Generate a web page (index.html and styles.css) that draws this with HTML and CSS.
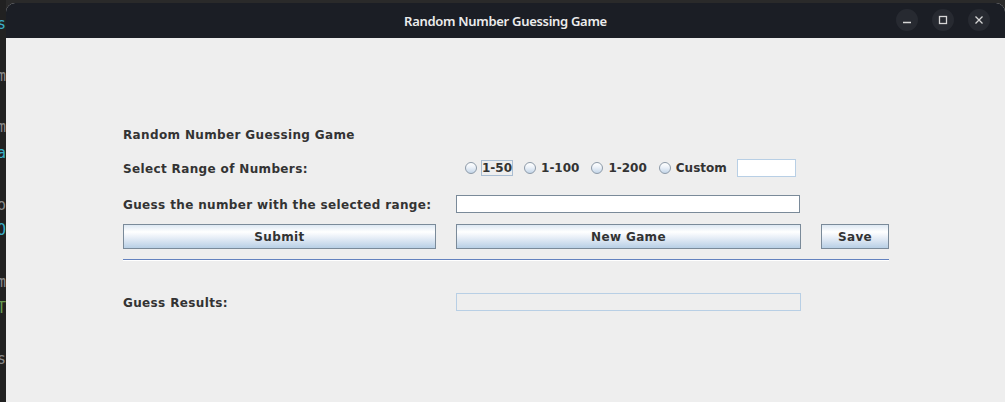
FILE: index.html
```html
<!DOCTYPE html>
<html>
<head>
<meta charset="utf-8">
<title>Random Number Guessing Game</title>
<link rel="stylesheet" href="styles.css">
</head>
<body>
<div class="desktop">
  <div class="side-strip">
    <div class="code cyan">class</div>
    <div class="code"></div>
    <div class="code gray">item</div>
    <div class="code"></div>
    <div class="code gray">enum</div>
    <div class="code cyan">a~</div>
    <div class="code"></div>
    <div class="code gray">do</div>
    <div class="code cyan">O</div>
    <div class="code"></div>
    <div class="code gray">sum</div>
    <div class="code green">INT</div>
    <div class="code"></div>
    <div class="code gray">ss</div>
  </div>
  <div class="window">
    <div class="titlebar">
      <div class="title">Random Number Guessing Game</div>
      <div class="controls">
        <div class="ctl">
          <svg width="10" height="10" viewBox="0 0 10 10"><path d="M1 7.5H9" stroke="#d6d6d6" stroke-width="1.3"/></svg>
        </div>
        <div class="ctl">
          <svg width="10" height="10" viewBox="0 0 10 10"><rect x="1.5" y="1.5" width="7" height="7" fill="none" stroke="#d6d6d6" stroke-width="1.3"/></svg>
        </div>
        <div class="ctl">
          <svg width="10" height="10" viewBox="0 0 10 10"><path d="M1.5 1.5L8.5 8.5M8.5 1.5L1.5 8.5" stroke="#d6d6d6" stroke-width="1.3"/></svg>
        </div>
      </div>
    </div>
    <div class="content">
      <div class="row row-title">
        <div class="label span-all">Random Number Guessing Game</div>
      </div>
      <div class="row row-range">
        <div class="label">Select Range of Numbers:</div>
        <div class="radios">
          <div class="radio"><span class="dot"></span><span class="rlabel focused">1-50</span></div>
          <div class="radio"><span class="dot"></span><span class="rlabel">1-100</span></div>
          <div class="radio"><span class="dot"></span><span class="rlabel">1-200</span></div>
          <div class="radio"><span class="dot"></span><span class="rlabel">Custom</span></div>
          <div class="field custom"></div>
        </div>
      </div>
      <div class="row row-guess">
        <div class="label">Guess the number with the selected range:</div>
        <div class="field guess"></div>
      </div>
      <div class="row row-buttons">
        <div class="btn">Submit</div>
        <div class="btn">New Game</div>
        <div class="btn">Save</div>
      </div>
      <div class="separator"></div>
      <div class="row row-results">
        <div class="label">Guess Results:</div>
        <div class="field results"></div>
      </div>
    </div>
  </div>
</div>
</body>
</html>
```

FILE: styles.css
```css
* { box-sizing: border-box; }
html, body { margin: 0; padding: 0; }
body { width: 1005px; height: 402px; overflow: hidden; background: #262626; }

.desktop {
  display: flex;
  height: 402px;
  padding-top: 3px;
  background: #2a2a2a;
}

.side-strip {
  width: 6px;
  flex: none;
  margin-top: -3px;
  padding-top: 12px;
  background: #212121;
  overflow: hidden;
  display: flex;
  flex-direction: column;
  align-items: flex-end;
}
.code {
  height: 25.8px;
  line-height: 25.8px;
  font-family: "DejaVu Sans Mono", monospace;
  font-size: 15px;
  white-space: nowrap;
  direction: rtl;
  text-align: right;
  width: 60px;
  flex: none;
}
.cyan { color: #3ab0c8; }
.gray { color: #8a8a8a; }
.green { color: #6a9a50; }

.window {
  flex: 1;
  display: flex;
  flex-direction: column;
  border-radius: 9px 9px 0 0;
  overflow: hidden;
  background: #eeeeee;
}

.titlebar {
  height: 35px;
  flex: none;
  background: #1b1e25;
  display: flex;
  align-items: center;
  justify-content: center;
  position: relative;
}
.title {
  font-family: "Noto Sans", "DejaVu Sans", sans-serif;
  font-weight: 600;
  font-size: 13px;
  color: #ececec;
  letter-spacing: -0.3px;
}
.controls {
  position: absolute;
  right: 15px;
  top: 6px;
  display: flex;
  gap: 14px;
}
.ctl {
  width: 22px;
  height: 22px;
  border-radius: 50%;
  background: #272a31;
  display: flex;
  align-items: center;
  justify-content: center;
}

.content {
  flex: 1;
  padding: 87px 0 0 117px;
  font-family: "DejaVu Sans", sans-serif;
  font-weight: bold;
  font-size: 12px;
  color: #333333;
}

.row {
  display: grid;
  grid-template-columns: 313px 345px 68px;
  grid-template-rows: 18px;
  column-gap: 20px;
  align-items: center;
  height: 18px;
}
.span-all { grid-column: 1 / 4; }
.label {
  white-space: nowrap;
  line-height: 18px;
  padding-top: 2px;
  margin: -1px 0;
  letter-spacing: 0.36px;
}

.row-range { margin-top: 16px; }
.row-guess { margin-top: 18px; }
.row-buttons { margin-top: 11px; height: 25px; grid-template-rows: 25px; align-items: stretch; }
.row-results { margin-top: 32px; }

.radios {
  grid-column: 2 / 4;
  display: flex;
  align-items: center;
  padding-left: 9px;
  height: 18px;
}
.radio {
  display: flex;
  align-items: center;
  gap: 4px;
  margin-right: 11px;
}
.radio:nth-child(4) { margin-right: 9px; }
.dot {
  width: 12px;
  height: 12px;
  border-radius: 50%;
  border: 1px solid #8d9aa8;
  background: linear-gradient(to bottom, #ffffff 0%, #eef3f9 40%, #c4d6e9 100%);
}
.rlabel {
  border: 1px solid transparent;
  line-height: 13px;
  padding: 1px 0 0;
}
.rlabel.focused { border-color: #a9bdd2; }

.field {
  height: 18px;
  background: #ffffff;
  border: 1px solid #7a8a99;
}
.field.custom {
  width: 59px;
  border-color: #b8cfe5;
}
.field.guess { width: 344px; }
.field.results {
  width: 345px;
  background: #eeeeee;
  border-color: #b8cfe5;
}

.btn {
  display: flex;
  align-items: center;
  justify-content: center;
  border: 1px solid #7a8a99;
  background: linear-gradient(to bottom, #dde8f3 0%, #ffffff 30%, #e7eef7 55%, #b8cfe5 100%);
  color: #333333;
  letter-spacing: 0.36px;
}

.separator {
  width: 766px;
  margin-top: 10px;
  border-top: 1px solid #6382bf;
  border-bottom: 1px solid #ffffff;
}
```
